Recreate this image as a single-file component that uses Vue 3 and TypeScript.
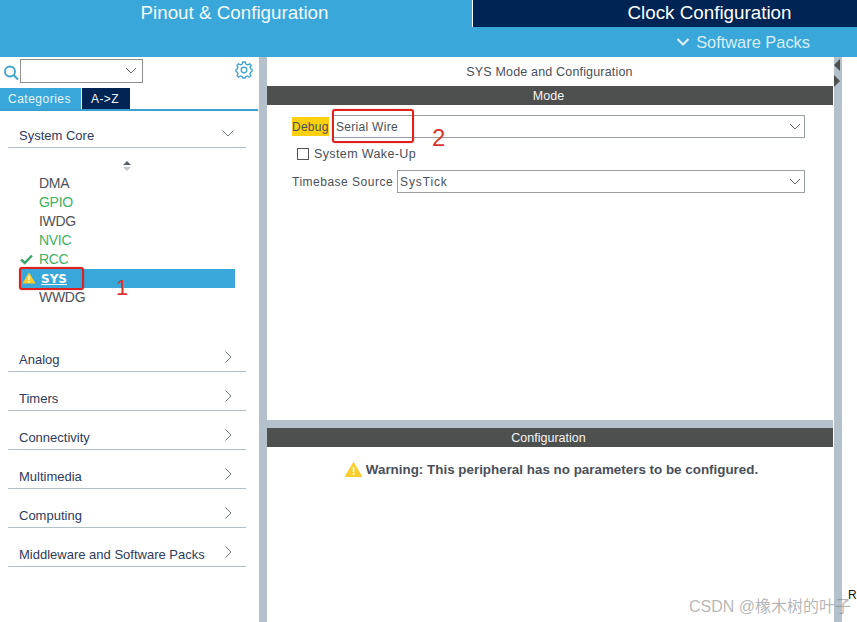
<script setup lang="ts">
const groups: string[] = ['Analog', 'Timers', 'Connectivity', 'Multimedia', 'Computing', 'Middleware and Software Packs']
interface Peripheral { name: string; cls: string }
const items: Peripheral[] = [
  { name: 'DMA', cls: '' },
  { name: 'GPIO', cls: 'green' },
  { name: 'IWDG', cls: '' },
  { name: 'NVIC', cls: 'green' },
  { name: 'RCC', cls: 'green' },
  { name: 'SYS', cls: 'sel' },
  { name: 'WWDG', cls: '' },
]
</script>

<template>
  <div class="page">
    <header class="top">
      <div class="tabs">
        <div class="tab tab-a">Pinout &amp; Configuration</div>
        <div class="tab tab-b">Clock Configuration</div>
      </div>
      <div class="packs">
        <svg width="14" height="10" viewBox="0 0 14 10"><path d="M1.5 2 L7 7.5 L12.5 2" fill="none" stroke="#dff1fa" stroke-width="2"/></svg>
        <span>Software Packs</span>
      </div>
    </header>

    <main class="main">
      <aside class="side">
        <div class="search">
          <svg class="lens" width="16" height="17" viewBox="0 0 16 17"><circle cx="7" cy="7.5" r="5" fill="none" stroke="#3aa0cf" stroke-width="1.8"/><path d="M10.5 11 L15 15.5" stroke="#3aa0cf" stroke-width="2"/></svg>
          <div class="combo">
            <svg width="12" height="7" viewBox="0 0 12 7"><path d="M1 1 L6 6 L11 1" fill="none" stroke="#666" stroke-width="1"/></svg>
          </div>
          <svg class="gear" width="18" height="18" viewBox="0 0 18 18">
            <circle cx="9" cy="9" r="2.8" fill="none" stroke="#3aa0cf" stroke-width="1.3"/>
            <path d="M7.6 1 H10.4 L10.8 3.2 L12.7 4 L14.6 2.7 L16.3 4.4 L15 6.3 L15.8 8 L17 8.4 V10.6 L15.8 11 L15 12.7 L15.9 14.6 L14.2 16.2 L12.4 15 L10.8 15.7 L10.4 17 H7.6 L7.2 15.7 L5.4 15 L3.6 16.2 L2 14.6 L3 12.7 L2.2 11 L1 10.6 V8.4 L2.2 8 L3 6.3 L1.8 4.4 L3.5 2.7 L5.4 4 L7.2 3.2 Z" fill="none" stroke="#3aa0cf" stroke-width="1.3" stroke-linejoin="round"/>
          </svg>
        </div>
        <div class="cat-tabs">
          <div class="cat on">Categories</div>
          <div class="cat off">A-&gt;Z</div>
        </div>

        <div class="nav">
          <div class="group">
            <span>System Core</span>
            <svg class="chev" width="12" height="7" viewBox="0 0 12 7"><path d="M0.5 0.5 L6 6 L11.5 0.5" fill="none" stroke="#6d7580" stroke-width="1"/></svg>
          </div>
          <div class="sorter">
            <i class="up"></i><i class="down"></i>
          </div>
          <ul class="list">
            <li v-for="it in items" :key="it.name" :class="it.cls">
              <svg v-if="it.name === 'RCC'" class="mark" width="13" height="11" viewBox="0 0 13 11"><path d="M1 5.5 L4.8 9 L12 1.5" fill="none" stroke="#3aa76d" stroke-width="2.4"/></svg>
              <svg v-if="it.name === 'SYS'" class="mark warn" width="14" height="12" viewBox="0 0 14 12"><path d="M7 0.5 L13.6 11.5 H0.4 Z" fill="#f8cf2e"/><path d="M7 4 V8 M7 9 V10.4" stroke="#fff" stroke-width="1.3"/></svg>
              <span>{{ it.name }}</span>
            </li>
          </ul>
          <div v-for="g in groups" :key="g" class="group closed">
            <span>{{ g }}</span>
            <svg class="chev" width="7" height="12" viewBox="0 0 7 12"><path d="M0.5 0.5 L6 6 L0.5 11.5" fill="none" stroke="#6d7580" stroke-width="1"/></svg>
          </div>
        </div>
      </aside>

      <section class="center">
        <div class="mode">
          <div class="title">SYS Mode and Configuration</div>
          <div class="bar">Mode</div>
          <div class="form">
            <div class="row">
              <span class="label yellow">Debug</span>
              <div class="select wide">
                <span>Serial Wire</span>
                <svg width="12" height="7" viewBox="0 0 12 7"><path d="M1 1 L6 6 L11 1" fill="none" stroke="#666" stroke-width="1"/></svg>
              </div>
            </div>
            <label class="check"><i class="box"></i><span>System Wake-Up</span></label>
            <div class="row">
              <span class="label base">Timebase Source</span>
              <div class="select tick">
                <span>SysTick</span>
                <svg width="12" height="7" viewBox="0 0 12 7"><path d="M1 1 L6 6 L11 1" fill="none" stroke="#666" stroke-width="1"/></svg>
              </div>
            </div>
          </div>
        </div>
        <div class="config">
          <div class="bar">Configuration</div>
          <div class="warning">
            <svg width="17" height="15" viewBox="0 0 17 15"><path d="M8.5 0.5 L16.8 14.5 H0.2 Z" fill="#f8cf2e" stroke="#f8cf2e" stroke-linejoin="round"/><path d="M8.5 5 V10 M8.5 11 V13" stroke="#fff" stroke-width="1.6"/></svg>
            <span>Warning: This peripheral has no parameters to be configured.</span>
          </div>
        </div>
      </section>

      <div class="strip">
        <i class="arrow left"></i>
        <i class="arrow right"></i>
      </div>
    </main>

    <div class="redbox box-1"></div>
    <div class="rednum num-1">1</div>
    <div class="redbox box-2"></div>
    <div class="rednum num-2">2</div>
    <div class="stray">R</div>
    <div class="watermark">CSDN @橡木树的叶子</div>
  </div>
</template>

<style>
html, body { margin: 0; padding: 0; background: #fff; overflow: hidden; }
</style>

<style scoped>
.page {
  position: relative;
  width: 857px;
  height: 622px;
  overflow: hidden;
  background: #fff;
  font-family: "Liberation Sans", Arial, sans-serif;
  color: #4a4f59;
}
.top { height: 57px; background: #3aa7da; display: flex; flex-direction: column; }
.tabs { display: flex; height: 27px; }
.tab {
  display: flex;
  align-items: center;
  justify-content: center;
  color: #fff;
  font-size: 18.8px;
  line-height: 25px;
  padding-bottom: 2px;
  box-sizing: border-box;
}
.tab-a { width: 472px; padding-right: 3px; background: #3aa7da; color: #f2fafd; }
.tab-b { flex: 1; padding-left: 89px; background: #002554; border-left: 1px solid #fff; }
.packs {
  flex: 1;
  display: flex;
  align-items: center;
  justify-content: flex-end;
  gap: 6px;
  padding-right: 47px;
  color: #d8eff9;
  font-size: 16.4px;
}
.main { display: flex; height: 565px; }
.side { width: 259px; flex: none; background: #fff; box-shadow: 8px 0 0 #b5c1ca; }
.search { height: 31px; display: flex; align-items: center; position: relative; }
.lens { margin-left: 3px; margin-top: -1px; }
.combo {
  width: 116px;
  height: 22px;
  margin-left: 1px;
  margin-top: -4px;
  border: 1px solid #8f8f8f;
  display: flex;
  align-items: center;
  justify-content: flex-end;
  padding-right: 5px;
  box-sizing: content-box;
}
.gear { margin-left: 92px; margin-top: -5px; }
.cat-tabs { height: 21px; display: flex; border-bottom: 2px solid #3aa0cf; margin-right: 1px; }
.cat {
  display: flex;
  align-items: center;
  font-size: 12px;
  letter-spacing: 0.5px;
  color: #e6f5fb;
}
.cat.on { width: 81px; padding-left: 8px; box-sizing: border-box; background: #3aa7da; }
.cat.off { width: 48px; margin-left: 1px; padding-left: 9px; box-sizing: border-box; background: #002554; letter-spacing: 0.4px; color: #f2f7fb; }
.nav { padding: 0 0 0 8px; width: 238px; }
.group {
  height: 37px;
  box-sizing: border-box;
  border-bottom: 1px solid #b4bec6;
  display: flex;
  align-items: flex-end;
  justify-content: space-between;
  padding: 0 12px 3px 11px;
  font-size: 13px;
  line-height: 17px;
  color: #2e3a5c;
}
.group.closed { height: 39px; }
.group .chev { margin-bottom: 7px; }
.group.closed .chev { margin-right: 2px; margin-bottom: 5px; }
.sorter {
  height: 26px;
  box-sizing: border-box;
  padding-top: 9px;
  display: flex;
  flex-direction: column;
  align-items: center;
  justify-content: center;
  gap: 2px;
}
.sorter .up { width: 0; height: 0; border: 4px solid transparent; border-top: 0; border-bottom: 4px solid #5a6068; }
.sorter .down { width: 0; height: 0; border: 4px solid transparent; border-bottom: 0; border-top: 4px solid #c4c8cc; }
.list { list-style: none; margin: 0 0 26px; padding: 0; }
.list li {
  height: 19px;
  box-sizing: border-box;
  padding-bottom: 2px;
  display: flex;
  align-items: center;
  position: relative;
  padding-left: 31px;
  font-size: 14px;
  letter-spacing: -0.3px;
  color: #4d5158;
}
.list li.green { color: #3fb162; }
.list li.sel {
  margin-left: 12px;
  margin-right: 11px;
  padding-left: 21px;
  padding-bottom: 0;
  background: #3aa7da;
  color: #fff;
  font-weight: 700;
  text-decoration: underline;
  letter-spacing: 0;
  font-family: "DejaVu Sans", sans-serif;
  font-size: 12px;
}
.mark { position: absolute; left: 12px; top: 4px; }
.mark.warn { left: 2px; top: 3px; }
.center { width: 566px; flex: none; margin-left: 8px; display: flex; flex-direction: column; }
.mode { height: 363px; flex: none; }
.title { height: 29px; display: flex; align-items: center; justify-content: center; font-size: 12.5px; color: #4a4f59; letter-spacing: 0.17px; padding-right: 1px; box-sizing: border-box; }
.bar {
  height: 19px;
  background: #4e5050;
  color: #f4f4f4;
  font-size: 12.5px;
  line-height: 20px;
  text-align: center;
  padding-right: 3px;
}
.form { padding: 10px 28px 0 25px; }
.row { display: flex; align-items: center; font-size: 12px; color: #4a4f59; }
.label { white-space: nowrap; letter-spacing: 0.25px; }
.label.base { letter-spacing: 0.5px; }
.yellow { background: #fbd00e; height: 19px; line-height: 20px; width: 37px; margin-right: 4px; flex: none; }
.select {
  flex: 1;
  height: 23px;
  box-sizing: border-box;
  border: 1px solid #9a9fa4;
  display: flex;
  align-items: center;
  justify-content: space-between;
  padding: 0 3px 0 2px;
  margin-left: 4px;
  letter-spacing: 0.3px;
}
.select.wide { margin-left: 0; }
.select.tick { letter-spacing: 0.85px; }
.check { display: flex; align-items: center; height: 32px; padding-left: 5px; font-size: 12.5px; letter-spacing: 0.38px; }
.box { width: 10px; height: 10px; border: 1px solid #555; margin-right: 5px; display: block; }
.config { flex: 1; margin-top: 8px; box-shadow: 0 -8px 0 #b5c1ca; }
.warning {
  display: flex;
  align-items: center;
  justify-content: center;
  gap: 4px;
  height: 45px;
  padding-left: 3px;
  box-sizing: border-box;
  font-size: 13.4px;
  font-weight: 700;
  color: #4a4f59;
}
.strip { width: 8px; flex: none; background: #b5c1ca; margin-left: 1px; position: relative; }
.arrow { position: absolute; width: 0; height: 0; border-style: solid; }
.arrow.left { left: 0; top: 2px; border-width: 6px 6px 6px 0; border-color: transparent #4e5050 transparent transparent; }
.arrow.right { left: 0; top: 18px; border-width: 6px 0 6px 6px; border-color: transparent transparent transparent #4e5050; }
.redbox { position: absolute; border: 2px solid #e0201c; border-radius: 3px; box-sizing: border-box; box-shadow: 0 0 1px #e0201c; }
.box-1 { left: 19px; top: 267px; width: 65px; height: 23px; }
.box-2 { left: 332px; top: 109px; width: 82px; height: 34px; }
.rednum { position: absolute; color: #d8352f; line-height: 22px; }
.num-1 { left: 116px; top: 277px; font-size: 22px; }
.num-2 { left: 432px; top: 127px; font-size: 24px; }
.stray { position: absolute; left: 848px; top: 588px; color: #111; font-size: 12px; line-height: 14px; }
.watermark {
  position: absolute;
  left: 689px;
  top: 597px;
  font-family: "Liberation Sans", "Noto Sans CJK SC", sans-serif;
  font-size: 16px;
  line-height: 20px;
  color: rgba(120, 120, 120, 0.55);
  white-space: nowrap;
}
</style>
